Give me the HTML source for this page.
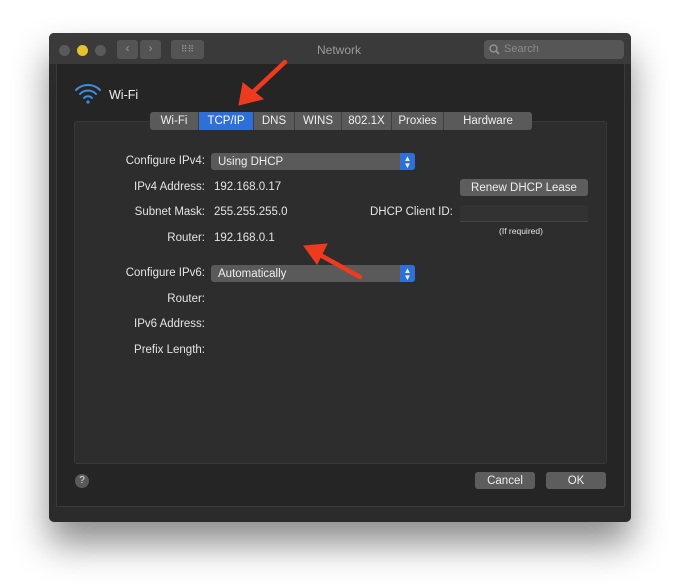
<!DOCTYPE html><html><head><style>
body{margin:0;width:680px;height:588px;background:#fff;position:relative;overflow:hidden;font-family:"Liberation Sans",sans-serif;font-size:11.5px;color:#e4e4e4}
.a{position:absolute}
.win{left:49px;top:33px;width:582px;height:489px;background:#2c2b2b;border-radius:5px;box-shadow:0 22px 36px rgba(0,0,0,.45)}
.tb{left:49px;top:33px;width:582px;height:31px;background:#3b3a3a;border-radius:5px 5px 0 0}
.inner{left:56px;top:64px;width:567px;height:442px;background:#262525;border:1px solid #3a3a3a;border-top:none}
.panel{left:74px;top:121px;width:531px;height:341px;background:#2d2d2d;border:1px solid #383838;border-radius:3px}
.lbl{text-align:right;width:110px;left:95px}
.btn{background:#5d5d5d;border-radius:3px;text-align:center;color:#eee;height:17px;line-height:18px}
.sel{background:#5a5a5a;border-radius:3px;height:17px;line-height:18px;padding-left:7px;color:#eee;box-sizing:border-box}
.arr{right:0;top:0;width:15px;height:17px;background:#2f6fd8;border-radius:0 3px 3px 0;font-size:8px;line-height:7px;text-align:center;padding-top:2px;box-sizing:border-box}
.tab{top:112px;height:18px;line-height:19px;text-align:center;background:#5a5a5a;color:#eee;border-right:1px solid #3e3e3e}
</style></head><body>
<div class="a win"></div><div class="a tb"></div>
<div class="a" style="left:59px;top:45px;width:11px;height:11px;border-radius:50%;background:#5a5a5a"></div>
<div class="a" style="left:77px;top:45px;width:11px;height:11px;border-radius:50%;background:#e8c12e"></div>
<div class="a" style="left:95px;top:45px;width:11px;height:11px;border-radius:50%;background:#5a5a5a"></div>
<div class="a" style="left:117px;top:40px;width:21px;height:19px;background:#545454;border-radius:3px;color:#999;text-align:center;line-height:19px">&lsaquo;</div>
<div class="a" style="left:140px;top:40px;width:21px;height:19px;background:#545454;border-radius:3px;color:#999;text-align:center;line-height:19px">&rsaquo;</div>
<div class="a" style="left:171px;top:40px;width:33px;height:19px;background:#545454;border-radius:3px;color:#999;text-align:center;line-height:19px;font-size:9px">⠿⠿</div>
<div class="a" style="left:317px;top:43px;color:#9a9a9a;font-size:12px">Network</div>
<div class="a" style="left:484px;top:40px;width:140px;height:19px;background:#565656;border-radius:4px;color:#8a8a8a;line-height:19px;font-size:11px"><svg class="a" style="left:5px;top:4px" width="11" height="11"><circle cx="4.5" cy="4.5" r="3.5" fill="none" stroke="#999" stroke-width="1.3"/><line x1="7" y1="7" x2="10" y2="10" stroke="#999" stroke-width="1.5"/></svg><span style="margin-left:20px">Search</span></div>
<div class="a inner"></div>
<svg class="a" style="left:73px;top:81px" width="30" height="24"><g fill="none" stroke="#3d8fe0" stroke-width="2" stroke-linecap="round"><path d="M3 9 A17 17 0 0 1 27 9"/><path d="M7 13 A11 11 0 0 1 23 13"/><path d="M11 17 A5.5 5.5 0 0 1 19 17"/></g><circle cx="15" cy="21" r="1.6" fill="#3d8fe0"/></svg>
<div class="a" style="left:109px;top:88px;color:#eee;font-size:12.5px">Wi-Fi</div>
<div class="a panel"></div>
<div class="a tab" style="left:150px;width:48px;border-radius:3px 0 0 3px">Wi-Fi</div>
<div class="a tab" style="left:199px;width:54px;background:#2f6fd8;color:#fff">TCP/IP</div>
<div class="a tab" style="left:254px;width:40px">DNS</div>
<div class="a tab" style="left:295px;width:46px">WINS</div>
<div class="a tab" style="left:342px;width:49px">802.1X</div>
<div class="a tab" style="left:392px;width:51px">Proxies</div>
<div class="a tab" style="left:444px;width:88px;border-radius:0 3px 3px 0;border:none">Hardware</div>
<div class="a lbl" style="top:155px">Configure IPv4:</div>
<div class="a sel" style="left:211px;top:153px;width:204px">Using DHCP<div class="a arr">▲<br>▼</div></div>
<div class="a lbl" style="top:181px">IPv4 Address:</div><div class="a" style="left:214px;top:181px">192.168.0.17</div>
<div class="a btn" style="left:460px;top:179px;width:128px">Renew DHCP Lease</div>
<div class="a lbl" style="top:206px">Subnet Mask:</div><div class="a" style="left:214px;top:206px">255.255.255.0</div>
<div class="a" style="left:370px;top:206px">DHCP Client ID:</div>
<div class="a" style="left:460px;top:205px;width:128px;height:16px;background:#323232;border-bottom:1px solid #444"></div>
<div class="a" style="left:499px;top:226px;font-size:8.5px">(If required)</div>
<div class="a lbl" style="top:232px">Router:</div><div class="a" style="left:214px;top:232px">192.168.0.1</div>
<div class="a lbl" style="top:267px">Configure IPv6:</div>
<div class="a sel" style="left:211px;top:265px;width:204px">Automatically<div class="a arr">▲<br>▼</div></div>
<div class="a lbl" style="top:293px">Router:</div>
<div class="a lbl" style="top:318px">IPv6 Address:</div>
<div class="a lbl" style="top:344px">Prefix Length:</div>
<div class="a" style="left:75px;top:474px;width:14px;height:14px;border-radius:50%;background:#5a5a5a;text-align:center;line-height:14px;font-size:10px">?</div>
<div class="a btn" style="left:475px;top:472px;width:60px">Cancel</div>
<div class="a btn" style="left:546px;top:472px;width:60px">OK</div>
<svg class="a" style="left:0;top:0" width="680" height="588"><g fill="#ee3a1f" stroke="#ee3a1f" stroke-width="4.5" stroke-linecap="round"><line x1="285" y1="62" x2="252" y2="93"/><polygon points="239,105 243,83 263,99" stroke-width="1"/><line x1="360" y1="277" x2="322" y2="256"/><polygon points="304,246 327,244 317,264" stroke-width="1"/></g></svg>
</body></html>
